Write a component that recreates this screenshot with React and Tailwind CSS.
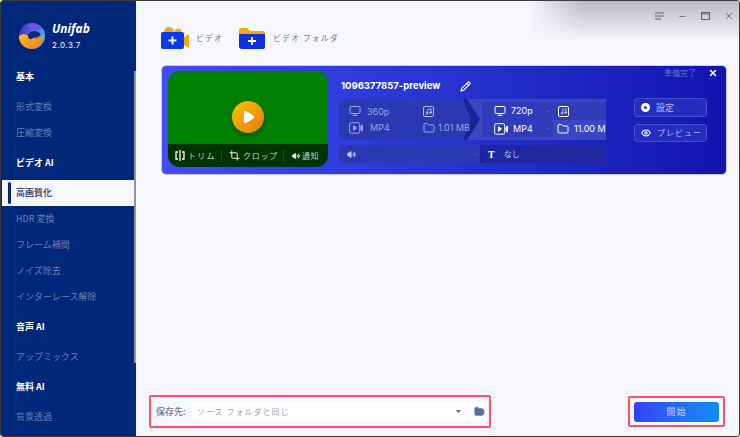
import React from "react";
import { Pencil, X, Minus, Monitor, Folder, FolderOpen, Eye, Volume2, Music, Crop, ChevronDown } from "lucide-react";

const font = { fontFamily: '"Noto Sans CJK JP","Noto Sans",sans-serif' };

function Logo() {
  return (
    <svg width="28" height="28" viewBox="0 0 30 30">
      <defs>
        <linearGradient id="lg1" x1="0" y1="0" x2="1" y2="0"><stop offset="0" stopColor="#5a23c8" /><stop offset="1" stopColor="#2fb4f5" /></linearGradient>
        <linearGradient id="lg2" x1="0" y1="0" x2="1" y2="1"><stop offset="0" stopColor="#ffc21a" /><stop offset="1" stopColor="#f07a1e" /></linearGradient>
      </defs>
      <circle cx="15" cy="15" r="14" fill="url(#lg1)" />
      <path d="M1 15c5-4 9-1 12 1 4 2 9 3 14-3 1 8-5 16-12 16C7 29 1 23 1 15z" fill="url(#lg2)" />
      <path d="M12 12c3-3 7-3 10-1 2 1 3 3 1 4-3 2-6 1-8 3-2 1-4 0-4-2s0-3 1-4z" fill="#12287e" />
      <path d="M13 1.500c5-1 10 1 13 6-4 1-7 0-10 1-2 0-4-1-4-3 0-2 0-3 1-4z" fill="#7b4be0" />
    </svg>
  );
}

function VideoAdd() {
  return (
    <svg width="30" height="24" viewBox="0 0 30 24">
      <circle cx="9" cy="6" r="5" fill="#f6a410" />
      <circle cx="18" cy="6" r="3.500" fill="#f6a410" />
      <path d="M24 11l5-3v14l-5-3z" fill="#f6a410" />
      <rect x="1" y="6" width="23" height="17" rx="2" fill="#0a3be8" />
      <path d="M12.500 10.500v8M8.500 14.500h8" stroke="#fff" strokeWidth="1.800" />
    </svg>
  );
}

function FolderAdd() {
  return (
    <svg width="28" height="24" viewBox="0 0 28 24">
      <path d="M1 4a2 2 0 012-2h6l3 3h13a2 2 0 012 2v4H1z" fill="#f6a410" />
      <path d="M1 8h26v13a2 2 0 01-2 2H4a3 3 0 01-3-3z" fill="#0a30e0" />
      <path d="M14 11v8M10 15h8" stroke="#fff" strokeWidth="1.800" />
    </svg>
  );
}

function VideoFile({ className }) {
  return (
    <svg width="14" height="12" viewBox="0 0 14 12" className={className} fill="none" stroke="currentColor">
      <rect x="0.700" y="0.700" width="10" height="10.500" rx="1.500" />
      <path d="M4.500 3.800v4.400l3-2.200z" fill="currentColor" />
      <path d="M12 4v4l1.500 1V3z" fill="currentColor" />
    </svg>
  );
}

function NavHead({ children }) {
  return <div className="h-[26px] my-[4px] first:mt-0 pl-[15px] flex items-center text-[9px] font-bold text-white">{children}</div>;
}

function NavItem({ children, active }) {
  if (active) {
    return (
      <div className="h-[26px] ml-px mr-[2px] bg-[#f5f7fd] flex items-center pl-[14px] relative text-[9px] text-[#1d2b55] font-medium">
        <span className="absolute left-[6px] top-[2px] bottom-[2px] w-[3px] rounded-sm bg-[#00277a]" />
        {children}
      </div>
    );
  }
  return <div className="h-[26px] pl-[15px] flex items-center text-[9px] text-[#6a80b5]">{children}</div>;
}

function Sidebar() {
  return (
    <aside className="w-[135px] shrink-0 bg-[#00277a] flex flex-col relative">
      <div className="h-[59px] flex pl-[17px] pt-[21px] gap-[6px]">
        <Logo />
        <div className="flex flex-col">
          <span className="text-[12px] leading-[14px] font-bold italic text-white" style={{ fontFamily: '"Open Sans",sans-serif' }}>Unifab</span>
          <span className="text-[8px] leading-[10px] mt-[4px] text-white tracking-[0.500px]" style={{ fontFamily: "Inter,sans-serif" }}>2.0.3.7</span>
        </div>
      </div>
      <NavHead>基本</NavHead>
      <NavItem>形式変換</NavItem>
      <NavItem>圧縮変換</NavItem>
      <NavHead>ビデオ AI</NavHead>
      <NavItem active>高画質化</NavItem>
      <NavItem>HDR 変換</NavItem>
      <NavItem>フレーム補間</NavItem>
      <NavItem>ノイズ除去</NavItem>
      <NavItem>インターレース解除</NavItem>
      <NavHead>音声 AI</NavHead>
      <NavItem>アップミックス</NavItem>
      <NavHead>無料 AI</NavHead>
      <NavItem>背景透過</NavItem>
      <span className="absolute right-0 top-[70px] w-[2px] h-[292px] bg-[#8d93a5]" />
    </aside>
  );
}

function Thumb() {
  return (
    <div className="w-[160px] h-[96px] shrink-0 rounded-[12px] overflow-hidden bg-[#008000] flex flex-col">
      <div className="flex-1 flex items-center justify-center pt-[18px]">
        <div className="w-[32px] h-[32px] rounded-full bg-gradient-to-br from-[#ffc400] to-[#e07a10] shadow-[0_3px_6px_rgba(0,0,0,0.35)] flex items-center justify-center">
          <svg width="13" height="14" viewBox="0 0 13 14"><path d="M2 2.500c0-1.500 1-2 2.300-1.300l7 4.200c1 .7 1 2.500 0 3.200l-7 4.200C3 13.500 2 13 2 11.500z" fill="#fff" /></svg>
        </div>
      </div>
      <div className="h-[23px] bg-[#003300] flex items-center text-[8px] text-[#c5d2c5]">
        <div className="w-[53px] flex items-center pl-[7px] gap-[3px] tracking-[1.200px]">
          <svg width="10" height="11" viewBox="0 0 10 11" fill="none" stroke="#fff" strokeWidth="1.300"><path d="M5 0v11M3 2H1v7h2M7 2h2v7H7" /></svg>
          <span>トリム</span>
        </div>
        <span className="w-px h-[12px] bg-[#1d4d1d]" />
        <div className="w-[61px] flex items-center pl-[7px] gap-[3px] tracking-[0.700px]">
          <Crop size={11} color="#fff" strokeWidth={2} />
          <span>クロップ</span>
        </div>
        <span className="w-px h-[12px] bg-[#1d4d1d]" />
        <div className="flex items-center pl-[8px] gap-[2px] tracking-[0.500px]">
          <Volume2 size={8} color="#fff" fill="#fff" />
          <span>通知</span>
        </div>
      </div>
    </div>
  );
}

function Middle() {
  return (
    <div className="w-[267px] ml-[11px] shrink-0 overflow-hidden flex flex-col -mt-[1px]" style={{ fontFamily: "Inter,sans-serif" }}>
      <div className="h-[28px] pt-[5px] flex items-center gap-[10px] mb-px">
        <span className="text-[9.500px] font-bold text-white w-[109px] whitespace-nowrap ml-[2px]">1096377857-preview</span>
        <Pencil size={11} color="#fff" strokeWidth={2.500} />
      </div>
      <div className="flex h-[41px]">
        <div className="w-[121px] shrink-0 rounded-l-[5px] bg-[#2b38b4] grid grid-cols-[74px_1fr] text-[9px] text-[#9da6dd] pl-[10px] py-[4px] whitespace-nowrap relative z-10">
          <div className="flex items-center gap-[6px]"><Monitor size={12} /><span>360p</span></div>
          <div className="flex items-center"><span className="w-[11px] h-[11px] border border-[#b5bcea] rounded-[2px] flex items-center justify-center"><Music size={7} color="#fff" /></span></div>
          <div className="flex items-center gap-[7px]"><VideoFile /><span>MP4</span></div>
          <div className="flex items-center gap-[2px]"><Folder size={12} /><span className="ml-[1px]">1.01 MB</span></div>
        </div>
        <div className="w-[22px] shrink-0 bg-[#3a47c2] overflow-hidden">
          <svg width="22" height="41" viewBox="0 0 22 41"><path d="M0 0h7l13 20.500L7 41H0l7-20.500z" fill="#1a2294" /><path d="M0 0h3l8 20.500L3 41H0z" fill="#2b38b4" /></svg>
        </div>
        <div className="flex-1 min-w-0 bg-[#3a47c2] flex flex-col pt-[3px] text-[9px] text-white whitespace-nowrap overflow-hidden">
          <div className="flex items-center h-[18px]">
            <div className="w-[71px] shrink-0 h-full bg-[#2f3bb8] rounded-[2px] flex items-center pl-[12px] pr-[2px] gap-[5px] relative">
              <Monitor size={12} /><span>720p</span>
              <ChevronDown size={5} className="absolute right-[3px] text-[#9da6dd]" />
            </div>
            <div className="h-full flex-1 bg-[#2f3bb8] flex items-center pl-[5px]">
              <span className="w-[11px] h-[11px] border border-white rounded-[2px] flex items-center justify-center"><Music size={7} color="#fff" /></span>
            </div>
          </div>
          <div className="flex items-center h-[17px]">
            <div className="w-[71px] shrink-0 h-full bg-[#2f3bb8] rounded-[2px] flex items-center pl-[12px] pr-[2px] gap-[5px] relative">
              <VideoFile /><span>MP4</span>
              <ChevronDown size={5} className="absolute right-[3px] text-[#9da6dd]" />
            </div>
            <div className="ml-[4px] flex items-center gap-[5px]"><Folder size={12} className="shrink-0" /><span>11.00 MB</span></div>
          </div>
        </div>
      </div>
      <div className="flex h-[18px] mt-[5px]">
        <div className="w-[141px] shrink-0 rounded-l-[3px] bg-[#2b38b4] flex items-center pl-[8px] text-[#c5cbf0] relative">
          <Volume2 size={9} fill="currentColor" />
          <ChevronDown size={5} className="absolute right-[2px] text-[#8a93d8]" />
        </div>
        <div className="w-[3px] shrink-0 bg-[#1a2294]" />
        <div className="flex-1 bg-[#1e279f] flex items-center pl-[5px] gap-[9px] text-[8px] text-[#c5cbf0]" style={font}>
          <span className="text-[10px] font-bold text-white" style={{ fontFamily: '"Liberation Serif",serif' }}>T</span>
          <span>なし</span>
        </div>
      </div>
    </div>
  );
}

function Actions() {
  return (
    <div className="w-[93px] ml-[28px] shrink-0 flex flex-col -mt-[6px]">
      <div className="h-[16px] flex items-center text-[8px] text-[#6670d0] pl-[30px]">
        <span>準備完了</span>
        <X size={10} color="#fff" strokeWidth={3.500} className="ml-[12px]" />
      </div>
      <button className="mt-[17px] w-[73px] h-[19px] rounded-[3px] border border-[#4450d0] bg-[#252cc0] flex items-center pl-[6px] gap-[6px] text-[9px] text-[#b5bcea]">
        <span className="w-[9px] h-[9px] rounded-full bg-white flex items-center justify-center"><span className="w-[3px] h-[3px] rounded-full bg-[#2a34c2]" /></span>
        <span>設定</span>
      </button>
      <button className="mt-[7px] w-[73px] h-[18px] rounded-[3px] border border-[#4450d0] bg-[#252cc0] flex items-center pl-[6px] gap-[6px] text-[8px] text-[#b5bcea] tracking-[1px]">
        <Eye size={10} color="#fff" strokeWidth={2.500} />
        <span>プレビュー</span>
      </button>
    </div>
  );
}

export default function App() {
  return (
    <div className="w-[740px] h-[437px] relative flex overflow-hidden bg-[#f5f7fd] border border-[#3b3b3b] rounded-[3px] box-border" style={font}>
      <Sidebar />
      <main className="flex-1 flex flex-col pl-[25px] pr-[12px] min-w-0">
        <div className="h-[64px] flex items-center pt-[10px] text-[8px] text-[#6f7684] tracking-[1px]">
          <span className="-ml-px"><VideoAdd /></span>
          <span className="ml-[6px]">ビデオ</span>
          <span className="ml-[15px]"><FolderAdd /></span>
          <span className="ml-[7px]">ビデオ フォルダ</span>
        </div>
        <div className="h-[110px] rounded-[5px] bg-gradient-to-r from-[#3f4df2] to-[#1313ae] border border-[#c9cdf5] flex pl-[6px] py-[5px]">
          <Thumb />
          <Middle />
          <Actions />
        </div>
        <div className="mt-auto mb-[8px] flex justify-between items-center">
          <div className="ml-[-12px] w-[342px] h-[33px] border-[2px] border-[#f8526c] rounded-[2px] flex items-center pl-[5px] pr-[2px] text-[9px]">
            <span className="text-[#6f7684] w-[36px] font-medium">保存先:</span>
            <div className="flex-1 h-[19px] bg-white rounded-l-[4px] flex items-center pl-[5px] pr-[6px] text-[#9aa0ad] tracking-[1px] relative text-[8px]">
              <span>ソース フォルダと同じ</span>
              <svg width="5" height="3" viewBox="0 0 5 3" className="absolute right-[7px]"><path d="M0 0h5L2.500 3z" fill="#5b6785" /></svg>
            </div>
            <div className="w-[18px] h-[19px] ml-px bg-white rounded-r-[4px] flex items-center justify-center pl-[3px]">
              <FolderOpen size={11} color="#5f6f9c" fill="#5f6f9c" />
            </div>
          </div>
          <div className="mr-[2px] w-[97px] h-[31px] border-[2px] border-[#f8526c] rounded-[2px] flex items-center justify-center">
            <button className="w-[85px] h-[20px] rounded-[3px] bg-gradient-to-r from-[#3340fb] to-[#0f8cf6] text-[9px] text-[#c8d6fb] tracking-[1px]">開始</button>
          </div>
        </div>
      </main>
      <div className="absolute right-0 top-0 w-[210px] h-[40px] bg-gradient-to-b from-[#b9bbbf] to-[#f5f7fd] pointer-events-none [mask-image:linear-gradient(to_right,transparent,black_25%)]" />
      <div className="absolute right-[5px] top-[10px] flex items-center gap-[14px] text-[#5c5f63]">
        <svg width="9" height="8" viewBox="0 0 9 8" fill="none" stroke="currentColor" strokeWidth="1"><path d="M0 1h9M0 4h9M0 7h6" /></svg>
        <Minus size={9} strokeWidth={2} />
        <svg width="9" height="8" viewBox="0 0 9 8" fill="none" stroke="currentColor"><rect x="0.500" y="0.500" width="8" height="7" /><path d="M0 2h9" /></svg>
        <X size={10} strokeWidth={2} />
      </div>
    </div>
  );
}
